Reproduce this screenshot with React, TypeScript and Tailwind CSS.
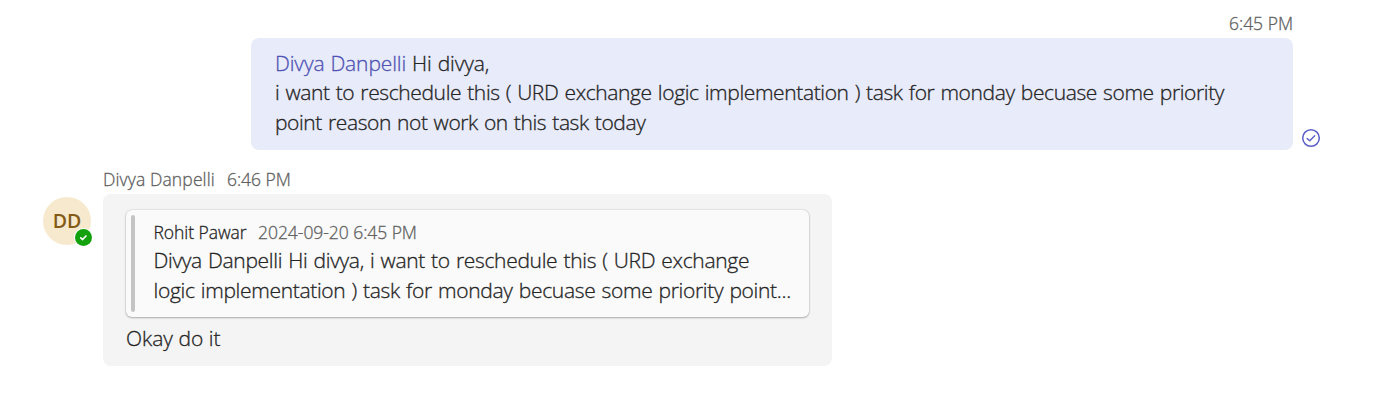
import React from "react";

function SeenIcon() {
  return (
    <svg className="h-5 w-5 shrink-0" viewBox="0 0 20 20" fill="none" stroke="#5b5fc7">
      <circle cx="10" cy="10" r="8.3" strokeWidth="1.5" />
      <path d="M6.2 10.4l2.5 2.3 5-5" strokeWidth="1.4" strokeLinecap="round" strokeLinejoin="round" />
    </svg>
  );
}

function Avatar() {
  return (
    <div className="relative mt-[3px] flex h-12 w-12 shrink-0 items-center justify-center rounded-full bg-[#f7e9cd]">
      <span className="text-[19.5px] leading-6 font-semibold text-[#835b17] [-webkit-text-stroke:0]">DD</span>
      <span className="absolute right-[-1px] bottom-[-1px] flex h-[17px] w-[17px] items-center justify-center rounded-full bg-[#13a10e] ring-1 ring-white">
        <svg className="h-[17px] w-[17px]" viewBox="0 0 17 17" fill="none" stroke="#fff">
          <path d="M5.8 8.9l1.8 1.6 3.4-3.5" strokeWidth="1.7" strokeLinecap="round" strokeLinejoin="round" />
        </svg>
      </span>
    </div>
  );
}

function Quote() {
  return (
    <div className="flex h-[107px] w-[683px] rounded-[6px] bg-[#fafafa] py-[5px] pl-[5px] shadow-[0_1px_2px_rgba(0,0,0,0.25),0_0_2px_rgba(0,0,0,0.2)]">
      <div className="w-1 shrink-0 rounded-[2px] bg-[#c4c4c4]" />
      <div className="pt-[5px] pl-[18.5px]">
        <div className="flex h-6 gap-[11.5px] text-[17.5px] leading-6 tracking-[-0.05px]">
          <span className="text-[#242424]">Rohit Pawar</span>
          <span className="text-[#616161]">2024-09-20 6:45 PM</span>
        </div>
        <p className="mt-[1px] text-[21px] leading-[30px] tracking-[-0.32px] [word-spacing:1px] whitespace-nowrap text-[#242424]">
          Divya Danpelli Hi divya, i want to reschedule this ( URD exchange
          <br />
          logic implementation ) task for monday becuase some priority point...
        </p>
      </div>
    </div>
  );
}

export default function App() {
  return (
    <main className="h-[403px] w-[1375px] overflow-hidden bg-white font-['Open_Sans','Noto_Sans',sans-serif] font-light [-webkit-text-stroke:0.3px]">
      <section className="flex flex-col pt-[11px] pl-[251px]">
        <div className="h-6 w-[1042px] text-right text-[17.5px] leading-6 text-[#616161]">6:45 PM</div>
        <div className="mt-[3px] flex items-end gap-2">
          <div className="h-28 w-[1042px] rounded-[8px] bg-[#e8ebfa] pt-[10px] pl-6 text-[21px] whitespace-nowrap text-[#242424]">
            <p className="h-[29px] leading-[30px] tracking-[-0.11px] [word-spacing:0.6px]">
              <span className="text-[#4f52b2]">Divya Danpelli</span> Hi divya,
            </p>
            <p className="leading-[30px] tracking-[-0.38px] [word-spacing:1px]">
              i want to reschedule this ( URD exchange logic implementation ) task for monday becuase some priority
            </p>
            <p className="leading-[30px] tracking-[-0.4px] [word-spacing:1px]">point reason not work on this task today</p>
          </div>
          <div className="pb-[2px]">
            <SeenIcon />
          </div>
        </div>
      </section>
      <section className="mt-[17px] pl-[43px]">
        <div className="flex h-6 gap-3 pl-[60px] text-[17.5px] leading-6 text-[#616161]">
          <span className="tracking-[0.13px]">Divya Danpelli</span>
          <span>6:46 PM</span>
        </div>
        <div className="mt-[3px] flex gap-3">
          <Avatar />
          <div className="h-[172px] w-[729px] rounded-[8px] bg-[#f4f4f4] pt-4 pl-[23px]">
            <Quote />
            <p className="mt-[6px] text-[21px] leading-[30px] text-[#242424]">Okay do it</p>
          </div>
        </div>
      </section>
    </main>
  );
}
